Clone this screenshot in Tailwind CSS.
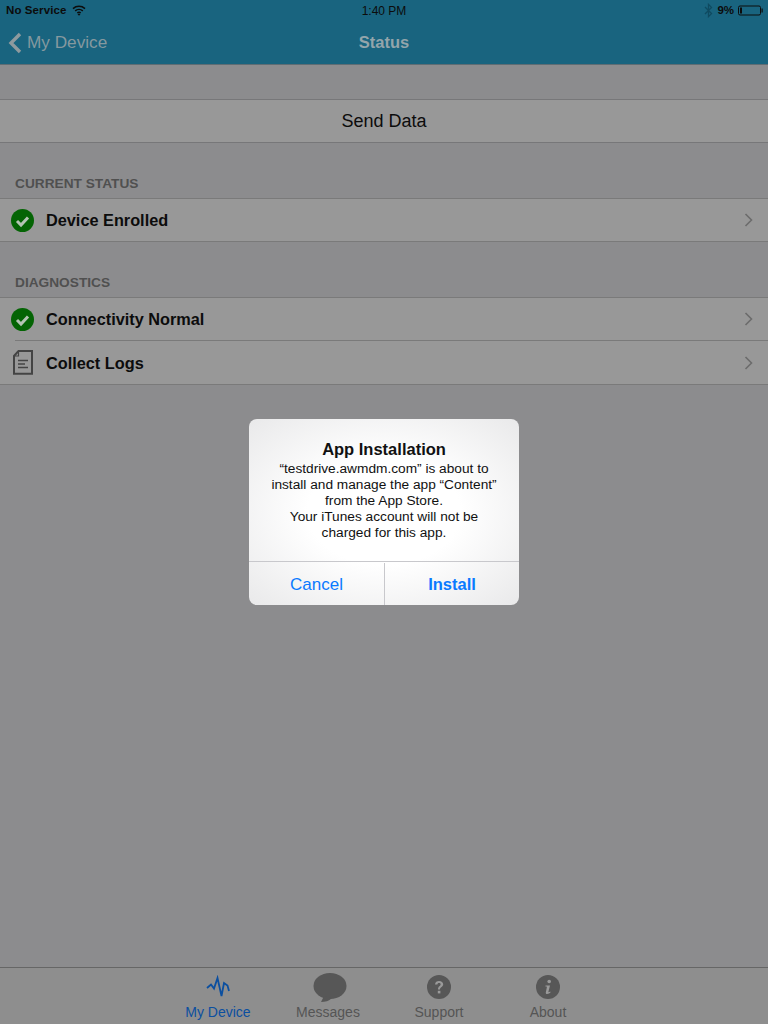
<!DOCTYPE html>
<html lang="en">
<head>
    <meta charset="UTF-8">
    <title>Status</title>
    <script src="https://cdn.jsdelivr.net/npm/@tailwindcss/browser@4"></script>
</head>
<body class="bg-[#8c8c8e] font-['Liberation_Sans',Arial,sans-serif]">
    <div class="relative flex flex-col h-[1024px] w-[768px] overflow-hidden">
        <!-- nav bar -->
        <div class="h-[65px] bg-[#19647f] border-b border-[#5f6d74] shrink-0">
            <div class="relative flex justify-between items-center h-[21px] pl-[6px] pr-[5px] text-[12px] text-[#0c0c0c]">
                <div class="flex items-center gap-[6px]">
                    <span class="font-bold text-[11.5px] tracking-[0.1px]">No Service</span>
                    <svg class="w-[14px] h-[11px]" viewBox="0 0 14 11" fill="none" stroke="#0c0c0c" stroke-width="1.5">
                        <path d="M1 3.6C4.4 .6 9.6 .6 13 3.6"/>
                        <path d="M3.2 5.9C5.3 4.1 8.7 4.1 10.8 5.9"/>
                        <path d="M5.3 8C6.2 7.3 7.8 7.3 8.7 8"/>
                        <path d="M7 10.8L5.6 9.2C6.4 8.6 7.6 8.6 8.4 9.2Z" fill="#0c0c0c" stroke="none"/>
                    </svg>
                </div>
                <span class="absolute left-0 right-0 text-center">1:40 PM</span>
                <div class="flex items-center gap-[4px]">
                    <svg class="w-[9px] h-[15px]" viewBox="0 0 9 15" fill="none" stroke="#0f4a60" stroke-width="1.3">
                        <path d="M1 4L7.5 10.6L4.5 13.6V1.4L7.5 4.4L1 11"/>
                    </svg>
                    <span class="font-bold text-[11.5px]">9%</span>
                    <svg class="w-[25px] h-[11px]" viewBox="0 0 25 11" fill="none">
                        <rect x=".5" y="1" width="22" height="9" rx="1.5" stroke="#0c0c0c"/>
                        <rect x="2" y="2.5" width="2" height="6" fill="#0c0c0c"/>
                        <rect x="23.5" y="3.5" width="1.2" height="4" fill="#0c0c0c"/>
                    </svg>
                </div>
            </div>
            <div class="relative flex items-center h-[43px] text-[17.2px]">
                <svg class="ml-[8px] w-[14px] h-[22px]" viewBox="0 0 14 22" fill="none" stroke="#8e9a9e" stroke-width="3.4">
                    <path d="M12 2L3 11L12 20"/>
                </svg>
                <span class="ml-[5px] text-[#85999f]">My Device</span>
                <span class="absolute left-0 right-0 text-center font-bold text-[16.5px] text-[#93a5ab]">Status</span>
            </div>
        </div>

        <!-- send data -->
        <div class="mt-[34px] h-[44px] flex items-center justify-center bg-[#989898] border-y border-[#777779] text-[18px] text-[#0c0c0c]">Send Data</div>

        <!-- current status -->
        <div class="mt-[32px] pl-[15px] h-[23px] text-[13.7px] leading-[17px] text-[#505050] font-bold">CURRENT STATUS</div>
        <div class="border-y border-[#7a7a7a] bg-[#989898]">
            <div class="flex items-center h-[42px] pl-[11px] pr-[15px] text-[#0c0c0c] text-[16.3px] font-bold">
                <svg class="w-[23px] h-[23px] shrink-0" viewBox="0 0 23 23">
                    <circle cx="11.5" cy="11.5" r="11.5" fill="#046404"/>
                    <path d="M6 12L10 16L17 8.5" fill="none" stroke="#b4c4b4" stroke-width="3"/>
                </svg>
                <span class="ml-[12px] flex-1">Device Enrolled</span>
                <svg class="w-[9px] h-[14px]" viewBox="0 0 9 14" fill="none" stroke="#6c6c6c" stroke-width="1.6">
                    <path d="M1.5 1L7.5 7L1.5 13"/>
                </svg>
            </div>
        </div>

        <!-- diagnostics -->
        <div class="mt-[32px] pl-[15px] h-[23px] text-[13.7px] leading-[17px] text-[#505050] font-bold">DIAGNOSTICS</div>
        <div class="border-y border-[#7a7a7a] bg-[#989898]">
            <div class="flex items-center h-[42px] pl-[11px] pr-[15px] text-[#0c0c0c] text-[16.3px] font-bold">
                <svg class="w-[23px] h-[23px] shrink-0" viewBox="0 0 23 23">
                    <circle cx="11.5" cy="11.5" r="11.5" fill="#046404"/>
                    <path d="M6 12L10 16L17 8.5" fill="none" stroke="#b4c4b4" stroke-width="3"/>
                </svg>
                <span class="ml-[12px] flex-1">Connectivity Normal</span>
                <svg class="w-[9px] h-[14px]" viewBox="0 0 9 14" fill="none" stroke="#6c6c6c" stroke-width="1.6">
                    <path d="M1.5 1L7.5 7L1.5 13"/>
                </svg>
            </div>
            <div class="ml-[15px] h-px bg-[#7a7a7a]"></div>
            <div class="flex items-center h-[43px] pl-[11px] pr-[15px] text-[#0c0c0c] text-[16.3px] font-bold">
                <svg class="w-[23px] h-[25px] shrink-0" viewBox="0 0 23 25" fill="none" stroke="#444" stroke-width="2">
                    <path d="M7.5 1H21V23.8H3V6Z"/>
                    <path d="M7.5 1V6H3" stroke-width="1.2"/>
                    <path d="M7 10.5H17M7 14H14M7 17.5H17" stroke-width="1.4"/>
                </svg>
                <span class="ml-[12px] pt-[2px] flex-1">Collect Logs</span>
                <svg class="w-[9px] h-[14px]" viewBox="0 0 9 14" fill="none" stroke="#6c6c6c" stroke-width="1.6">
                    <path d="M1.5 1L7.5 7L1.5 13"/>
                </svg>
            </div>
        </div>

        <!-- tab bar -->
        <div class="mt-auto h-[57px] pr-[2px] bg-[#8e8e8e] border-t border-[#666] flex justify-center text-[14px] text-[#555]">
            <div class="w-[110px] flex flex-col items-center pt-[7px] text-[#0b4fa0]">
                <svg class="w-[24px] h-[24px]" viewBox="0 0 24 24" fill="none" stroke="#0b4fa0" stroke-width="1.8">
                    <path d="M1 13L5 9.5L8 13.5L11.5 3L15.5 21L18 8L21.5 10.5L23 16"/>
                </svg>
                <span class="mt-[3px]">My Device</span>
            </div>
            <div class="w-[110px] flex flex-col items-center pt-[5px]">
                <svg class="w-[34px] h-[30px] ml-[3px] -mb-[1px]" viewBox="0 0 34 30">
                    <ellipse cx="17" cy="13" rx="16.5" ry="13" fill="#575757"/>
                    <path d="M11 23L8 29C12 29 16 28 19 25Z" fill="#575757"/>
                </svg>
                <span>Messages</span>
            </div>
            <div class="w-[110px] pl-[2px] flex flex-col items-center pt-[7px]">
                <svg class="w-[24px] h-[24px]" viewBox="0 0 24 24">
                    <circle cx="12" cy="12" r="12" fill="#575757"/>
                    <path d="M8 9.5C8 7 10 6 12 6C14.5 6 16.2 7.3 16.2 9.3C16.2 12 13 12 13 14.5H11C11 11 13.6 11 13.6 9.4C13.6 8.5 13 8 12 8C11 8 10.4 8.6 10.4 9.5Z" fill="#9a9a9a"/>
                    <rect x="10.8" y="15.8" width="2.6" height="2.6" fill="#9a9a9a"/>
                </svg>
                <span class="mt-[3px]">Support</span>
            </div>
            <div class="w-[110px] flex flex-col items-center pt-[7px]">
                <svg class="w-[24px] h-[24px]" viewBox="0 0 24 24">
                    <circle cx="12" cy="12" r="12" fill="#575757"/>
                    <circle cx="13.2" cy="6.5" r="1.8" fill="#9a9a9a"/>
                    <path d="M9.5 10.5H14L12.4 16.8C12.3 17.4 13 17.4 14.2 16.5L14.6 17.2C13 19 9.6 19.8 9.8 17.4L10.9 12C10.9 11.5 10.3 11.4 9.4 11.5Z" fill="#9a9a9a"/>
                </svg>
                <span class="mt-[3px]">About</span>
            </div>
        </div>

        <!-- alert -->
        <div class="absolute left-[249px] top-[419px] w-[270px] h-[186px] rounded-[8px] overflow-hidden flex flex-col bg-[radial-gradient(ellipse_at_center,#ffffff_40%,#e9e9ea_100%)] text-center">
            <div class="h-[142px] pt-[20px] text-[#111]">
                <div class="text-[16.5px] leading-[20px] font-bold">App Installation</div>
                <div class="text-[13.7px] leading-[16px] mt-[2px] whitespace-nowrap">
                    “testdrive.awmdm.com” is about to<br>
                    install and manage the app “Content”<br>
                    from the App Store.<br>
                    Your iTunes account will not be<br>
                    charged for this app.
                </div>
            </div>
            <div class="flex-1 flex border-t border-[#c8c8cc] pt-[1px] text-[17px] text-[#0a7aff]">
                <div class="w-[136px] pt-[2px] border-r border-[#c8c8cc] flex items-center justify-center">Cancel</div>
                <div class="flex-1 flex items-center justify-center font-bold text-[16.5px]">Install</div>
            </div>
        </div>
    </div>
</body>
</html>
